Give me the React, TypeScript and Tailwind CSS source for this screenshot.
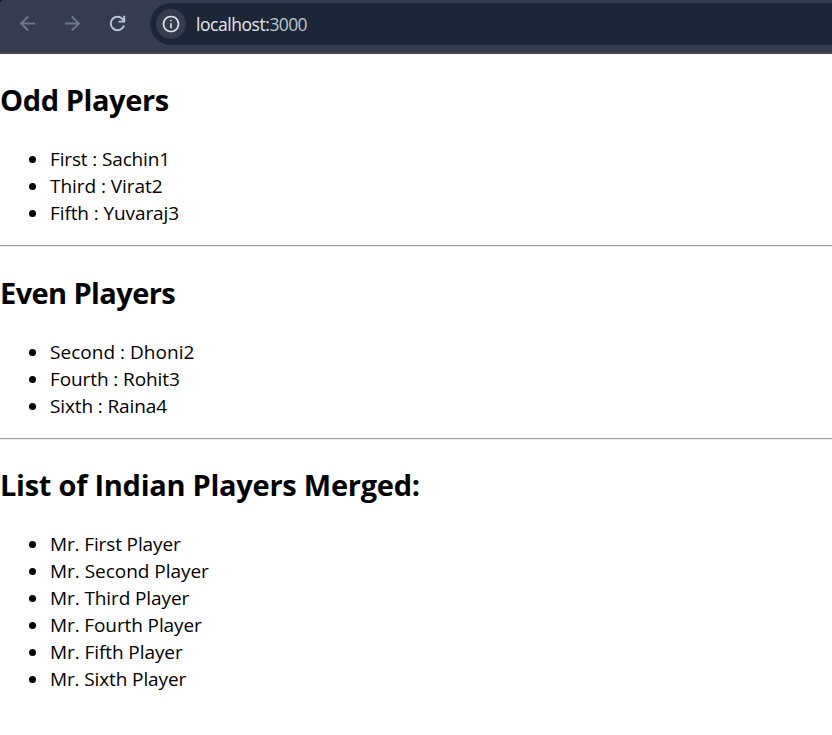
type Item = { text: string; tracking: string };

const oddPlayers: Item[] = [
  { text: "First : Sachin1", tracking: "tracking-[-0.14px]" },
  { text: "Third : Virat2", tracking: "tracking-[-0.05px]" },
  { text: "Fifth : Yuvaraj3", tracking: "tracking-[-0.1px]" },
];

const evenPlayers: Item[] = [
  { text: "Second : Dhoni2", tracking: "tracking-[0.03px]" },
  { text: "Fourth : Rohit3", tracking: "tracking-[-0.1px]" },
  { text: "Sixth : Raina4", tracking: "tracking-[-0.12px]" },
];

const mergedPlayers: Item[] = [
  { text: "Mr. First Player", tracking: "tracking-[-0.13px]" },
  { text: "Mr. Second Player", tracking: "tracking-[-0.03px]" },
  { text: "Mr. Third Player", tracking: "tracking-[-0.1px]" },
  { text: "Mr. Fourth Player", tracking: "tracking-[-0.11px]" },
  { text: "Mr. Fifth Player", tracking: "tracking-[-0.08px]" },
  { text: "Mr. Sixth Player", tracking: "tracking-[-0.12px]" },
];

const BACK = "m313-440 224 224-57 56-320-320 320-320 57 56-224 224h487v80H313Z";
const FORWARD = "M647-440H160v-80h487L423-744l57-56 320 320-320 320-57-56 224-224Z";
const RELOAD =
  "M480-160q-134 0-227-93t-93-227q0-134 93-227t227-93q69 0 132 28.5T720-690v-110h80v280H520v-80h168q-32-56-87.5-88T480-720q-100 0-170 70t-70 170q0 100 70 170t170 70q77 0 139-44t87-116h84q-28 106-114 173t-196 67Z";
const INFO =
  "M440-280h80v-240h-80v240Zm40-320q17 0 28.5-11.5T520-640q0-17-11.5-28.5T480-680q-17 0-28.5 11.5T440-640q0 17 11.5 28.5T480-600Zm0 520q-83 0-156-31.5T197-197q-54-54-85.5-127T80-480q0-83 31.5-156T197-763q54-54 127-85.5T480-880q83 0 156 31.5T763-763q54 54 85.5 127T880-480q0 83-31.5 156T763-197q-54 54-127 85.5T480-80Zm0-80q134 0 227-93t93-227q0-134-93-227t-227-93q-134 0-227 93t-93 227q0 134 93 227t227 93Z";

function Icon({ d, className }: { d: string; className: string }) {
  return (
    <svg viewBox="0 -960 960 960" fill="currentColor" className={className}>
      <path d={d} />
    </svg>
  );
}

function Toolbar() {
  return (
    <div className="bg-[#10151f]">
      <header className="flex h-[54px] rounded-tl-[4px] border-b-2 border-[#49474c] bg-[#343c4d] pt-[3px]">
        <nav className="flex h-[41px] w-[150px] shrink-0 items-center gap-[22px] pl-4">
          <Icon d={BACK} className="size-[23px] text-[#6f7889]" />
          <Icon d={FORWARD} className="size-[23px] text-[#6f7889]" />
          <Icon d={RELOAD} className="size-[23px] text-[#bac4dc]" />
        </nav>
        <div className="flex h-[42px] flex-1 items-center rounded-l-full bg-[#1d2636] pl-[6px]">
          <span className="flex size-[30px] items-center justify-center rounded-full bg-[#343c4d]">
            <Icon d={INFO} className="size-5 text-[#dfe2ea]" />
          </span>
          <p className="pl-[10px] text-[17.5px] leading-6 text-[#e4e7ee]">
            <span className="tracking-[-0.45px]">localhost:</span>
            <span className="tracking-[-0.6px] text-[#bcc3d0]">3000</span>
          </p>
        </div>
      </header>
    </div>
  );
}

function Heading({ text, className }: { text: string; className: string }) {
  return <h2 className={`text-[29px] leading-10 font-bold ${className}`}>{text}</h2>;
}

function List({ items }: { items: Item[] }) {
  return (
    <ul className="mt-[26px] pl-[29px]">
      {items.map((item) => (
        <li
          key={item.text}
          className={`flex h-[27px] items-center gap-[14px] text-[19px] leading-[27px] before:size-[7px] before:rounded-full before:bg-black before:content-[''] ${item.tracking}`}
        >
          {item.text}
        </li>
      ))}
    </ul>
  );
}

function Rule() {
  return <hr className="mt-[18px] h-[2px] border-t border-b border-t-[#9a9a9a] border-b-[#eeeeee]" />;
}

export default function App() {
  return (
    <div className="min-h-[735px] overflow-hidden bg-white font-['Open_Sans','Noto_Sans',sans-serif] text-black">
      <Toolbar />
      <main>
        <section className="pt-[26px]">
          <Heading text="Odd Players" className="tracking-[-0.4px]" />
          <List items={oddPlayers} />
        </section>
        <Rule />
        <section className="pt-[26px]">
          <Heading text="Even Players" className="tracking-[-0.6px]" />
          <List items={evenPlayers} />
        </section>
        <Rule />
        <section className="pt-[25px]">
          <Heading text="List of Indian Players Merged:" className="tracking-[-0.26px]" />
          <List items={mergedPlayers} />
        </section>
      </main>
    </div>
  );
}
